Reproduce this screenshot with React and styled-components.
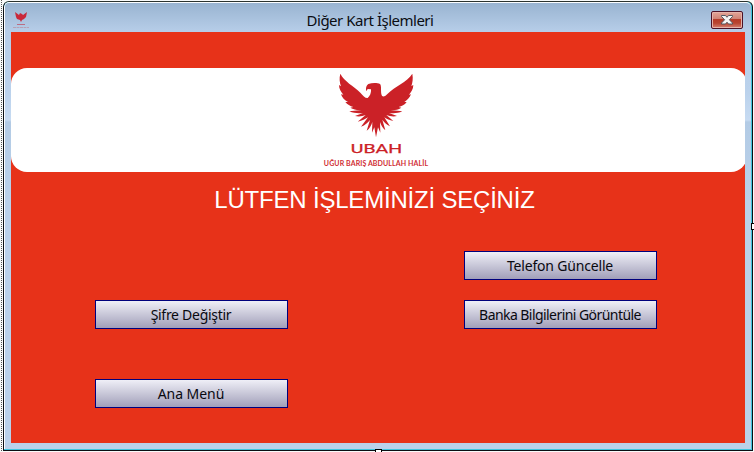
import React from "react";
import styled, { createGlobalStyle } from "styled-components";

const GlobalStyle = createGlobalStyle`
  *, *::before, *::after { box-sizing: border-box; }
  html, body { margin: 0; padding: 0; background: #f8faf9; overflow: hidden; }
`;

const DesignSurface = styled.div`
  position: relative;
  width: 754px;
  height: 452px;
  padding: 1px 1px 1px 3px;
  overflow: hidden;
  background: #f8faf9;
  &::before {
    content: "";
    position: absolute;
    left: 1px;
    top: 0;
    width: 1px;
    height: 100%;
    background: repeating-linear-gradient(#555 0 1px, #f8faf9 1px 2px);
  }
`;

const Frame = styled.div`
  width: 750px;
  height: 450px;
  border: 1px solid #0a0f14;
  border-top-color: #2b332e;
  border-radius: 6px 6px 0 0;
  background: #3fc4dd;
  overflow: hidden;
`;

const Glass = styled.div`
  display: flex;
  flex-direction: column;
  width: 747px;
  height: 447px;
  padding: 0 5px 0 6px;
  border: solid #fbfdff;
  border-width: 1px 0 0 1px;
  border-radius: 5px 5px 0 0;
  background: linear-gradient(#98b3d0 0, #b6cde8 29px, #bbd2ec 90px, #c7dbf2 118px, #b3cbe5 120px, #bad1ea 200px, #bad1ea);
  background-origin: border-box;
`;

const TitleBar = styled.header`
  display: grid;
  grid-template-columns: 40px 1fr 40px;
  height: 29px;
  flex: none;
`;

const AppIcon = styled.div`
  padding: 9px 0 0 1px;
  svg { display: block; }
`;

const Title = styled.h1`
  margin: 0;
  padding-right: 17px;
  text-align: center;
  white-space: nowrap;
  font: 400 15px/34px "Noto Sans", "Open Sans", sans-serif;
  letter-spacing: -0.5px;
  color: #0b0d12;
`;

const CloseButton = styled.button`
  justify-self: end;
  display: flex;
  align-items: center;
  justify-content: center;
  width: 32px;
  height: 18px;
  margin: 8px 3px 0 0;
  padding: 0;
  border: 1px solid #4c1226;
  border-radius: 2px;
  background: linear-gradient(#e3a598 0, #cf8375 44%, #b53a27 47%, #b84531 70%, #d58173 100%);
  box-shadow: inset 0 0 0 1px #e5b3aa;
`;

const Content = styled.main`
  width: 734px;
  height: 411px;
  overflow: hidden;
  background: #e73219;
`;

const Banner = styled.section`
  display: flex;
  flex-direction: column;
  align-items: center;
  width: 736px;
  height: 104px;
  margin-top: 36px;
  padding: 2px 6px 0 0;
  border-radius: 16px;
  background: #fff;
  svg { display: block; flex: none; }
`;

const Brand = styled.div`
  height: 14px;
  margin-top: 2px;
  font: 400 12.5px/14px Roboto, "Open Sans", sans-serif;
  color: #cb2127;
  -webkit-text-stroke: 0.25px #cb2127;
  transform: scaleX(1.56);
`;

const Members = styled.div`
  height: 10px;
  margin-top: 2px;
  font: 700 7px/10px Lato, sans-serif;
  letter-spacing: 0.1px;
  white-space: nowrap;
  color: #d02e34;
`;

const Heading = styled.h2`
  height: 28px;
  margin: 14px 7px 0 0;
  text-align: center;
  font: 400 24px/28px "Liberation Sans", Arial, sans-serif;
  letter-spacing: -0.2px;
  white-space: nowrap;
  color: #fff;
`;

const Actions = styled.div`
  display: grid;
  grid-template-columns: 193px 193px;
  grid-template-rows: 29px 29px 29px;
  column-gap: 176px;
  row-gap: 20px;
  padding: 37px 0 0 84px;
`;

const ActionButton = styled.button`
  grid-column: ${(p) => p.$column};
  grid-row: ${(p) => p.$row};
  width: 193px;
  height: 29px;
  margin: ${(p) => p.$offset || 0}px 0 0;
  padding: 0 1px 0 0;
  border: 1px solid #00007c;
  background: linear-gradient(#efeff7, #a19fb9);
  font: 400 14px/27px "Noto Sans", "Open Sans", sans-serif;
  letter-spacing: ${(p) => p.$spacing}px;
  white-space: nowrap;
  color: #090910;
`;

const Grip = styled.i`
  position: absolute;
  border: 1px solid #000;
  background: #fff;
  left: ${(p) => p.$x}px;
  top: ${(p) => p.$y}px;
  width: 7px;
  height: 7px;
`;

function Eagle({ width, height }) {
  return (
    <svg width={width} height={height} viewBox="0 0 246 210" aria-hidden="true">
      <path
        fill="#cb2127"
        d="M16 11 C27 34 56 48 76 68 C84 77 91 85 98 84 C105 79 109 68 108 58 L98 57 L94 64 C91 54 94 46 100 42 C111 38 127 38 135 42 C140 48 137 60 139 72 C142 85 151 78 158 71 C179 50 216 36 232 11 C235 27 232 39 229 48 L235 45 C235 58 228 67 222 74 L228 73 C224 84 216 91 208 96 L215 96 C209 105 200 109 191 111 L199 113 C188 120 177 121 167 120 L202 124 C188 131 174 130 162 129 L186 138 C174 141 163 138 154 135 L175 153 C164 151 155 147 148 142 L165 169 C155 164 148 157 142 149 L151 181 C143 174 138 165 135 156 L136 188 L129 172 L123 202 L118 172 L111 188 L112 156 C109 166 104 176 95 182 L105 150 C98 158 91 166 78 170 L99 142 C91 147 82 153 68 155 L92 135 C82 139 72 141 60 138 L84 129 C71 131 57 130 43 124 L79 120 C67 121 56 119 46 113 L55 111 C45 108 37 104 31 96 L39 96 C29 91 21 83 18 73 L25 74 C18 66 12 57 12 45 L18 49 C14 37 12 25 16 11 Z"
      />
    </svg>
  );
}

export default function App() {
  return (
    <>
      <GlobalStyle />
      <DesignSurface>
        <Frame>
          <Glass>
            <TitleBar>
              <AppIcon>
                <svg width="18" height="17" viewBox="0 0 18 17" aria-hidden="true">
                  <path fill="#c9293b" d="M3 0 L7 3 L8 1 L10 2 L11 3 L15 0 L14 5 L12 7 L10 8 L9 10 L8 8 L5 7 L4 5 Z" />
                  <path stroke="#bb6d83" strokeWidth="1" d="M5 12.5 H13" />
                  <path stroke="#b8a0b4" strokeWidth="1" strokeDasharray="3 .5" d="M1 15.5 H17" />
                </svg>
              </AppIcon>
              <Title>Diğer Kart İşlemleri</Title>
              <CloseButton aria-label="Kapat">
                <svg width="14" height="12" viewBox="0 0 14 12">
                  <path
                    fill="#f5f5f5"
                    stroke="#53565f"
                    strokeWidth="1"
                    d="M1.5 1.5 H5.5 L7 3.3 L8.5 1.5 H12.5 V2.5 L9.4 5.8 L12.5 9 V10 H8.5 L7 8.2 L5.5 10 H1.5 V9 L4.6 5.8 L1.5 2.5 Z"
                  />
                </svg>
              </CloseButton>
            </TitleBar>
            <Content>
              <Banner>
                <Eagle width={82} height={70} />
                <Brand>UBAH</Brand>
                <Members>UĞUR BARIŞ ABDULLAH HALİL</Members>
              </Banner>
              <Heading>LÜTFEN İŞLEMİNİZİ SEÇİNİZ</Heading>
              <Actions>
                <ActionButton $column={2} $row={1} $spacing={-0.18}>Telefon Güncelle</ActionButton>
                <ActionButton $column={1} $row={2} $spacing={-0.28}>Şifre Değiştir</ActionButton>
                <ActionButton $column={2} $row={2} $spacing={-0.56}>Banka Bilgilerini Görüntüle</ActionButton>
                <ActionButton $column={1} $row={3} $offset={30} $spacing={-0.05}>Ana Menü</ActionButton>
              </Actions>
            </Content>
          </Glass>
        </Frame>
        <Grip $x={751} $y={223} />
        <Grip $x={375} $y={449} />
      </DesignSurface>
    </>
  );
}
